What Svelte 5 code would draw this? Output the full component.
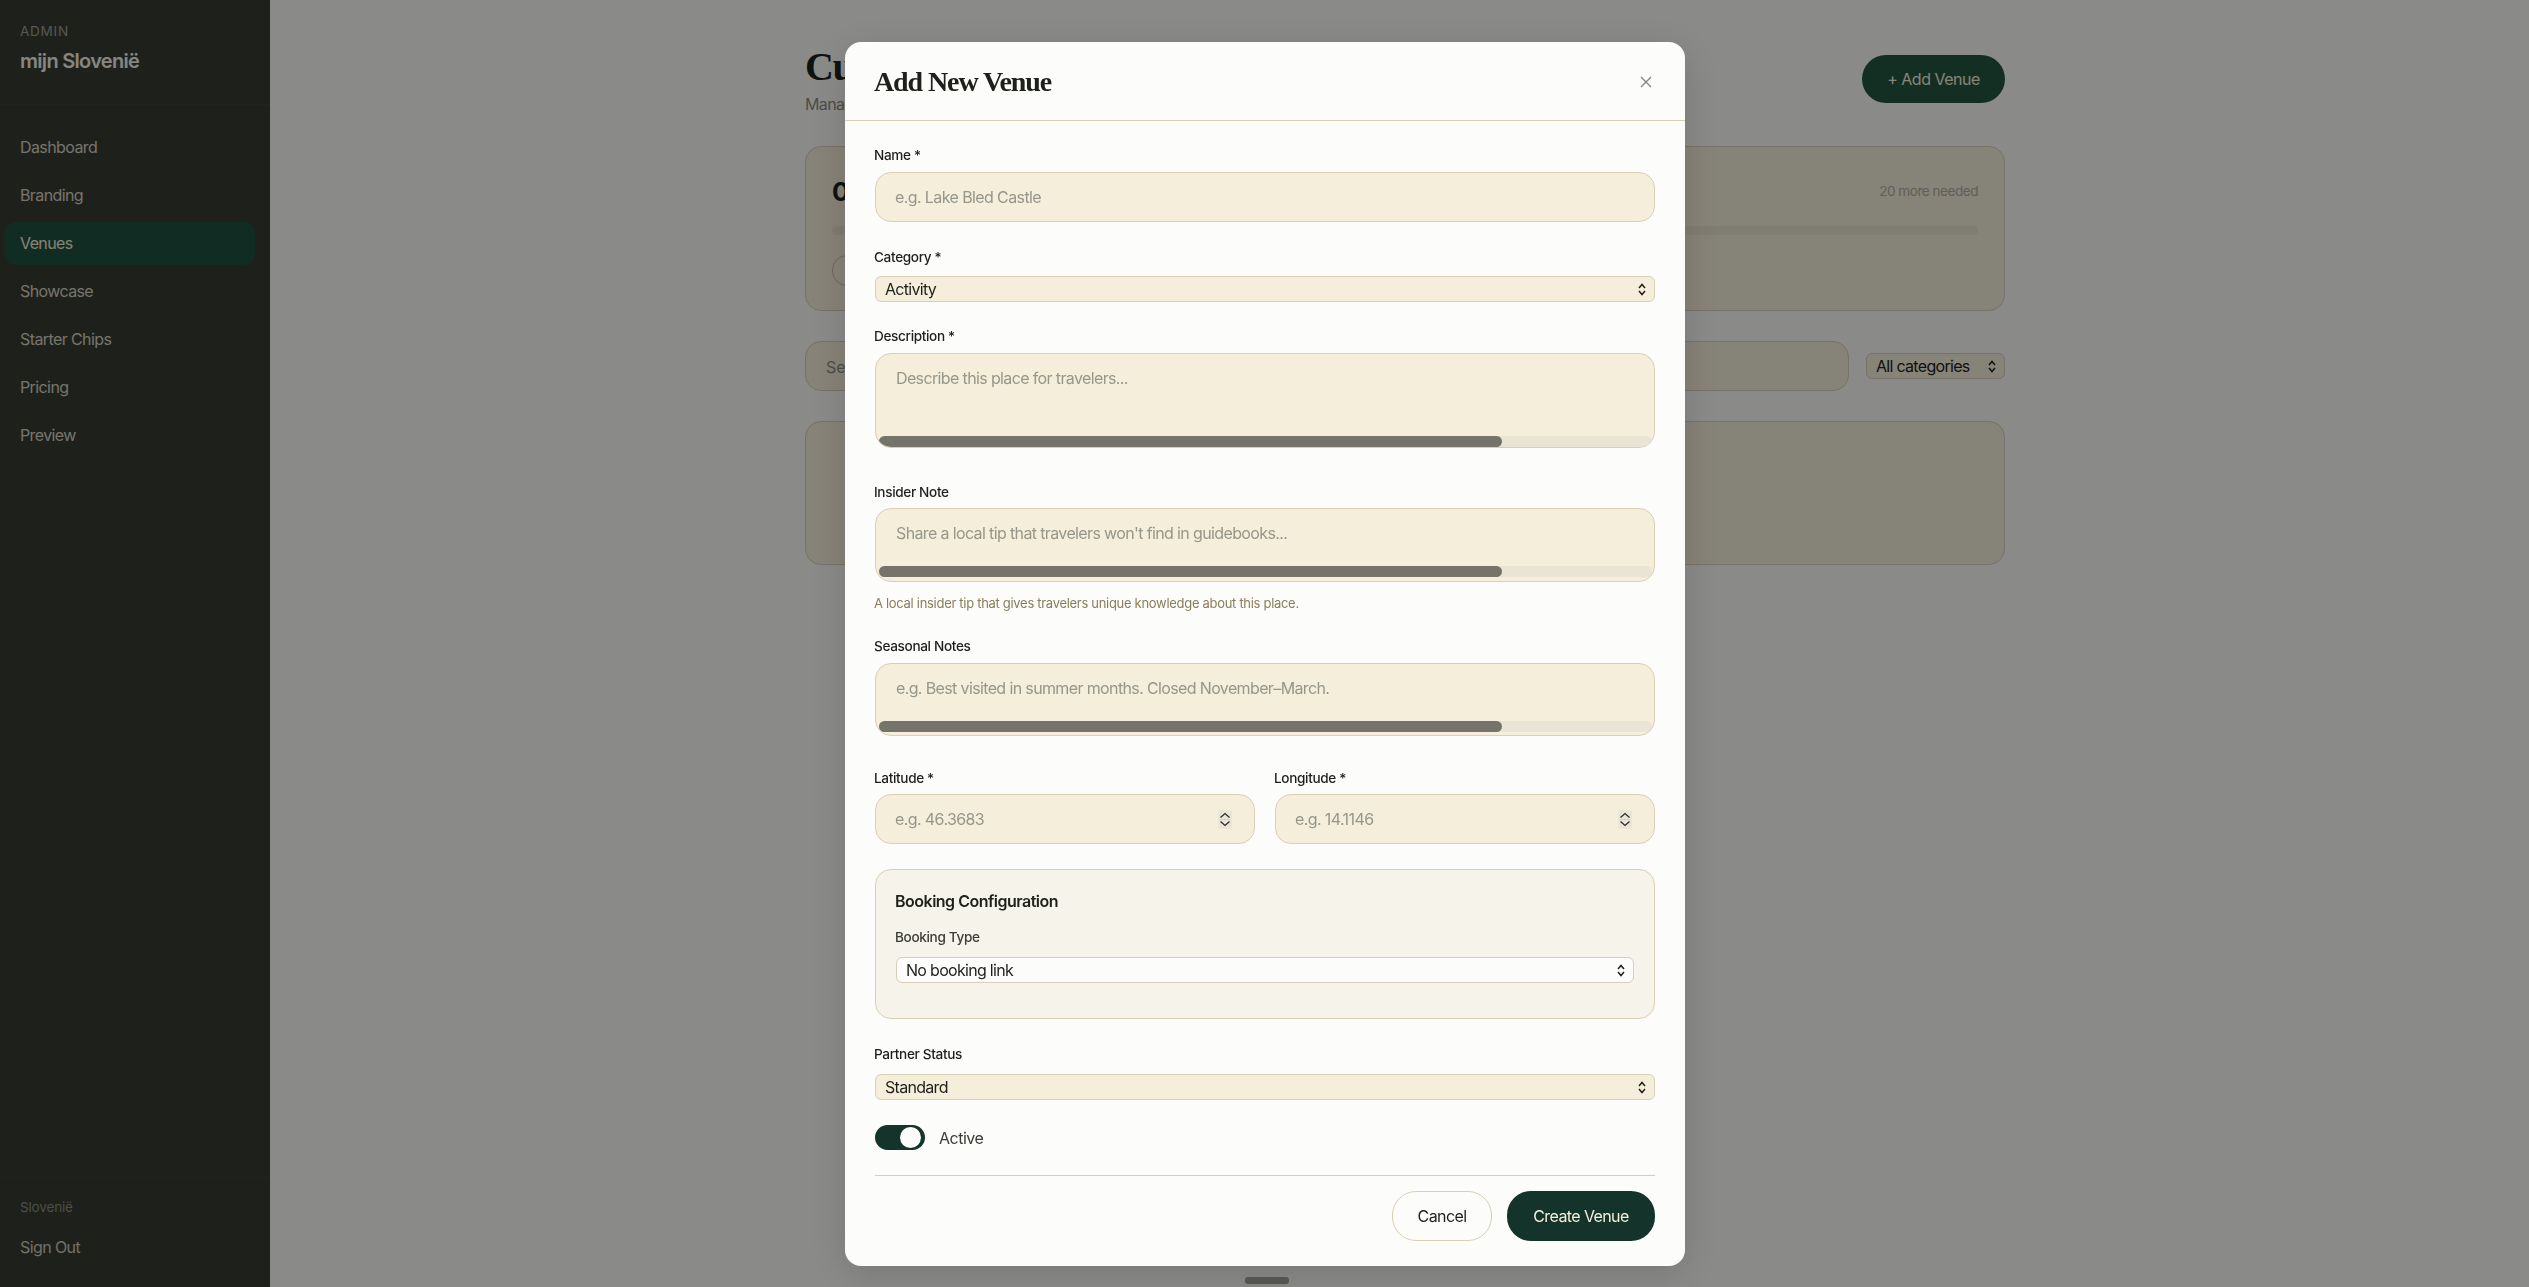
<script>
  const nav = ['Dashboard', 'Branding', 'Venues', 'Showcase', 'Starter Chips', 'Pricing', 'Preview'];
  const active = 'Venues';
  let isActive = $state(true);
</script>

{#snippet chevrons()}
  <svg class="chev" width="8" height="13" viewBox="0 0 8 13"><path d="M1 5l3-3.500L7 5M1 8l3 3.500L7 8" stroke="#1e211b" stroke-width="1.500" fill="none" /></svg>
{/snippet}

{#snippet spinner()}
  <svg width="14" height="19" viewBox="0 0 14 19"><rect width="14" height="19" rx="2" fill="#e9e5d8" /><path d="M2.500 7.500L7 3.500l4.500 4M2.500 11.500L7 15.500l4.500-4" stroke="#2a2a26" stroke-width="1.300" fill="none" /><path d="M2 9.500h10" stroke="#d5d0c0" stroke-width="1" /></svg>
{/snippet}

<div class="page">
  <aside class="sidebar">
    <div class="brand">
      <div class="admin">ADMIN</div>
      <div class="site">mijn Slovenië</div>
    </div>
    <nav>
      {#each nav as item}
        <div class="nav-item" class:on={item === active}>{item}</div>
      {/each}
    </nav>
    <div class="side-foot">
      <div class="region">Slovenië</div>
      <div class="signout">Sign Out</div>
    </div>
  </aside>

  <main>
    <div class="head">
      <div>
        <h1>Curated Venues</h1>
        <p class="sub">Manage venues</p>
      </div>
      <button class="add">+ Add Venue</button>
    </div>
    <section class="card progress">
      <div class="progress-top">
        <b>0</b>
        <span>20 more needed</span>
      </div>
      <div class="bar"></div>
      <div class="pill"></div>
    </section>
    <div class="filters">
      <div class="search">Search venues</div>
      <div class="sel-wrap filter">
        <select class="sel"><option>All categories</option></select>
        {@render chevrons()}
      </div>
    </div>
    <section class="card empty"></section>
  </main>
</div>

<div class="overlay">
  <div class="modal">
    <header>
      <h2>Add New Venue</h2>
      <svg class="close" width="12" height="12" viewBox="0 0 12 12"><path d="M1 1l10 10M11 1L1 11" stroke="#85857a" stroke-width="1.300" fill="none" /></svg>
    </header>
    <form>
      <label class="lbl" for="name">Name *</label>
      <input id="name" class="field" placeholder="e.g. Lake Bled Castle" />

      <label class="lbl l2" for="cat">Category *</label>
      <div class="sel-wrap">
        <select id="cat" class="sel"><option>Activity</option></select>
        {@render chevrons()}
      </div>

      <label class="lbl l3" for="desc">Description *</label>
      <div class="area tall">
        <textarea id="desc" placeholder="Describe this place for travelers..."></textarea>
        <div class="track"><div class="thumb"></div></div>
      </div>

      <label class="lbl l4" for="ins">Insider Note</label>
      <div class="area">
        <textarea id="ins" placeholder="Share a local tip that travelers won't find in guidebooks..."></textarea>
        <div class="track"><div class="thumb"></div></div>
      </div>
      <p class="help">A local insider tip that gives travelers unique knowledge about this place.</p>

      <label class="lbl l5" for="sea">Seasonal Notes</label>
      <div class="area short">
        <textarea id="sea" placeholder="e.g. Best visited in summer months. Closed November–March."></textarea>
        <div class="track"><div class="thumb"></div></div>
      </div>

      <div class="coords">
        <div>
          <label class="lbl" for="lat">Latitude *</label>
          <div class="field num">
            <input id="lat" placeholder="e.g. 46.3683" />
            {@render spinner()}
          </div>
        </div>
        <div>
          <label class="lbl" for="lng">Longitude *</label>
          <div class="field num">
            <input id="lng" placeholder="e.g. 14.1146" />
            {@render spinner()}
          </div>
        </div>
      </div>

      <div class="booking">
        <h3>Booking Configuration</h3>
        <label class="lbl small" for="bt">Booking Type</label>
        <div class="sel-wrap inner">
          <select id="bt" class="sel white"><option>No booking link</option></select>
          {@render chevrons()}
        </div>
      </div>

      <label class="lbl l6" for="ps">Partner Status</label>
      <div class="sel-wrap partner">
        <select id="ps" class="sel"><option>Standard</option></select>
        {@render chevrons()}
      </div>

      <div class="toggle-row">
        <button type="button" class="toggle" class:off={!isActive} aria-label="Active" onclick={() => (isActive = !isActive)}><span></span></button>
        <span class="toggle-text">Active</span>
      </div>

      <div class="actions">
        <button type="button" class="cancel">Cancel</button>
        <button type="button" class="create">Create Venue</button>
      </div>
    </form>
  </div>
  <div class="handle"></div>
</div>

<style>
  :global(body) {
    margin: 0;
    font-family: Inter, "Liberation Sans", sans-serif;
    background: #fcfcfa;
    color: #1e211b;
  }

  .page {
    display: flex;
    height: 1287px;
    overflow: hidden;
  }

  .sidebar {
    width: 270px;
    flex: none;
    background: #373c32;
    display: flex;
    flex-direction: column;
    box-sizing: border-box;
  }

  .brand {
    padding: 22px 20px 0;
    height: 105px;
    box-sizing: border-box;
    border-bottom: 1px solid #3d4238;
  }

  .admin {
    font-size: 13.600px;
    line-height: 18px;
    letter-spacing: 0.7px;
    color: #9da197;
  }

  .site {
    margin-top: 9px;
    font-size: 20px;
    line-height: 24px;
    font-weight: 600;
    color: #f5f3ec;
    letter-spacing: -0.7px;
  }

  nav {
    padding: 16px 5px 0 5px;
    width: 250px;
    flex: 1;
    display: flex;
    flex-direction: column;
    gap: 5px;
    margin-top: 5px;
  }

  .nav-item {
    height: 43px;
    line-height: 43px;
    padding-left: 15px;
    font-size: 16px;
    letter-spacing: -0.6px;
    color: #d8d4c6;
    border-radius: 11px;
  }

  .nav-item.on {
    background: #1f5240;
    color: #f5eedb;
  }

  .side-foot {
    border-top: 1px solid #3d4238;
    padding: 20px 20px 30px;
    height: 110px;
    box-sizing: border-box;
  }

  .region {
    font-size: 13.600px;
    line-height: 18px;
    letter-spacing: -0.2px;
    color: #8a8e82;
  }

  .signout {
    margin-top: 21px;
    font-size: 16px;
    line-height: 20px;
    letter-spacing: -0.6px;
    color: #cfcdc0;
  }

  main {
    width: 1200px;
    margin-left: 535px;
    padding-top: 55px;
    box-sizing: border-box;
  }

  .head {
    display: flex;
    justify-content: space-between;
    align-items: flex-start;
    height: 91px;
  }

  h1 {
    margin: -5px 0 0;
    font-family: "Liberation Serif", serif;
    font-size: 40px;
    line-height: 34px;
    font-weight: 700;
    letter-spacing: -1.5px;
  }

  .sub {
    margin: 10px 0 0;
    font-size: 16px;
    line-height: 20px;
    letter-spacing: -0.6px;
    color: #8b8c82;
  }

  .add {
    width: 143px;
    height: 48px;
    border: none;
    border-radius: 24px;
    background: #245741;
    color: #f5eedb;
    font: 16px Inter, sans-serif;
    letter-spacing: -0.5px;
  }

  .card {
    background: #f5eedb;
    border: 1px solid #d9cfb4;
    border-radius: 16px;
    box-sizing: border-box;
  }

  .progress {
    height: 165px;
    padding: 27px 26px 0;
  }

  .progress-top {
    display: flex;
    justify-content: space-between;
    align-items: center;
    height: 34px;
  }

  .progress-top b {
    font-size: 26px;
  }

  .progress-top span {
    font-size: 13.600px;
    letter-spacing: -0.5px;
    color: #b0ad9e;
  }

  .bar {
    height: 9px;
    margin-top: 18px;
    border-radius: 5px;
    background: #e9e3cf;
  }

  .pill {
    margin-top: 20px;
    width: 100px;
    height: 29px;
    border: 1px solid #c9bfa5;
    border-radius: 15px;
  }

  .filters {
    display: flex;
    align-items: center;
    gap: 17px;
    margin-top: 30px;
  }

  .search {
    flex: 1;
    height: 50px;
    box-sizing: border-box;
    padding-left: 20px;
    line-height: 50px;
    background: #f5eedb;
    border: 1px solid #d9cfb4;
    border-radius: 16px;
    color: #8b8c82;
  }

  .empty {
    height: 144px;
    margin-top: 30px;
  }

  .overlay {
    position: fixed;
    inset: 0;
    background: rgba(0, 0, 0, 0.45);
  }

  .modal {
    position: absolute;
    left: 845px;
    top: 42px;
    width: 840px;
    height: 1224px;
    background: #fcfcfb;
    border-radius: 16px;
    box-shadow: 0 8px 40px rgba(0, 0, 0, 0.15);
    overflow: hidden;
  }

  header {
    height: 79px;
    box-sizing: border-box;
    border-bottom: 1px solid #d9cfb4;
    padding: 2px 33px 0 29px;
    display: flex;
    align-items: center;
    justify-content: space-between;
  }

  h2 {
    margin: 0;
    font-family: "Liberation Serif", serif;
    font-size: 28px;
    font-weight: 700;
    letter-spacing: -1.1px;
    color: #1e211b;
  }

  form {
    padding: 25px 30px 0;
  }

  .lbl {
    display: block;
    font-size: 13.600px;
    line-height: 18px;
    font-weight: 500;
    letter-spacing: -0.35px;
    margin-left: -1px;
    color: #1e211b;
  }

  .field {
    display: block;
    width: 100%;
    height: 50px;
    margin-top: 8px;
    box-sizing: border-box;
    padding: 0 19px;
    background: #f5eedb;
    border: 1px solid #d9cfb4;
    border-radius: 16px;
    font: 16px Inter, sans-serif;
    letter-spacing: -0.6px;
    color: #1e211b;
    outline: none;
  }

  input::placeholder,
  textarea::placeholder {
    color: #96968a;
  }

  .sel-wrap {
    position: relative;
    margin-top: 10px;
  }

  .sel-wrap.inner {
    margin-top: 11px;
  }

  .sel-wrap.partner {
    margin-top: 11px;
  }

  .sel-wrap.filter {
    width: 139px;
    margin-top: 0;
    flex: none;
  }

  .chev {
    position: absolute;
    right: 9px;
    top: 7px;
    pointer-events: none;
  }

  .sel {
    appearance: none;
    display: block;
    width: 100%;
    height: 26px;
    box-sizing: border-box;
    padding: 0 0 0 9px;
    background: #f5eedb;
    border: 1px solid #d9cfb4;
    border-radius: 6px;
    font: 16px Inter, sans-serif;
    letter-spacing: -0.7px;
    color: #1e211b;
  }

  .sel.white {
    background: #fcfcfb;
  }

  .l2 {
    margin-top: 26px;
  }

  .l3 {
    margin-top: 25px;
  }

  .l4 {
    margin-top: 35px;
  }

  .l5 {
    margin-top: 25px;
  }

  .l6 {
    margin-top: 26px;
  }

  .area {
    margin-top: 7px;
    height: 74px;
    box-sizing: border-box;
    border: 1px solid #d9cfb4;
    border-radius: 16px;
    background: #f5eedb;
    display: flex;
    flex-direction: column;
    overflow: hidden;
    padding: 0 2px 4px;
  }

  .area.tall {
    margin-top: 8px;
    height: 95px;
    padding-bottom: 0;
  }

  .area.short {
    margin-top: 8px;
    height: 73px;
    padding-bottom: 3px;
  }

  textarea {
    flex: 1;
    display: block;
    width: 100%;
    box-sizing: border-box;
    border: none;
    background: none;
    padding: 14px 18px 0;
    resize: none;
    overflow: hidden;
    outline: none;
    font: 16px/20px Inter, sans-serif;
    letter-spacing: -0.63px;
    color: #1e211b;
  }

  .track {
    height: 11px;
    background: #e9e4d3;
    border-radius: 6px;
    flex: none;
    margin-left: 1px;
  }

  .thumb {
    width: 80.600%;
    height: 100%;
    background: #75736a;
    border-radius: 6px;
  }

  .help {
    margin: 12px 0 0 -1px;
    font-size: 13px;
    line-height: 18px;
    letter-spacing: -0.3px;
    color: #8a7d5a;
  }

  .coords {
    display: grid;
    grid-template-columns: 1fr 1fr;
    gap: 20px;
    margin-top: 33px;
  }

  .num {
    display: flex;
    align-items: center;
    gap: 6px;
    margin-top: 7px;
    padding-right: 22px;
  }

  .num input {
    flex: 1;
    min-width: 0;
    border: none;
    background: none;
    outline: none;
    padding: 0;
    font: 16px Inter, sans-serif;
    letter-spacing: -0.6px;
    color: #1e211b;
  }

  .booking {
    margin-top: 25px;
    height: 150px;
    box-sizing: border-box;
    border: 1px solid #d9cfb4;
    border-radius: 16px;
    background: #f6f3ea;
    padding: 19px 20px 0;
  }

  h3 {
    margin: 0 0 0 -1px;
    font-size: 16px;
    line-height: 24px;
    font-weight: 600;
    letter-spacing: -0.5px;
    color: #1e211b;
  }

  .small {
    margin: 15px 0 0 -1px;
    color: #3a3d35;
  }

  .toggle-row {
    display: flex;
    align-items: center;
    gap: 14px;
    margin-top: 25px;
  }

  .toggle {
    width: 50px;
    height: 25px;
    border: none;
    border-radius: 13px;
    background: #14332a;
    padding: 0 4px 0 2px;
    display: flex;
    align-items: center;
    justify-content: flex-end;
  }

  .toggle.off {
    background: #d9cfb4;
    justify-content: flex-start;
  }

  .toggle span {
    width: 21px;
    height: 21px;
    border-radius: 50%;
    background: #fcfcfb;
  }

  .toggle-text {
    font-size: 16px;
    letter-spacing: -0.5px;
    color: #3a3d35;
  }

  .actions {
    display: flex;
    justify-content: flex-end;
    gap: 15px;
    margin-top: 25px;
    padding-top: 15px;
    border-top: 1px solid #d9cfb4;
  }

  .actions button {
    height: 50px;
    border-radius: 24px;
    font: 16px Inter, sans-serif;
    letter-spacing: -0.6px;
  }

  .cancel {
    width: 100px;
    background: none;
    border: 1px solid #d9cfb4;
    color: #1e211b;
  }

  .create {
    width: 148px;
    background: #14332a;
    border: none;
    color: #f5eedb;
  }

  .handle {
    position: absolute;
    left: 1245px;
    top: 1277px;
    width: 44px;
    height: 7px;
    border-radius: 3px;
    background: #55554f;
  }
</style>
